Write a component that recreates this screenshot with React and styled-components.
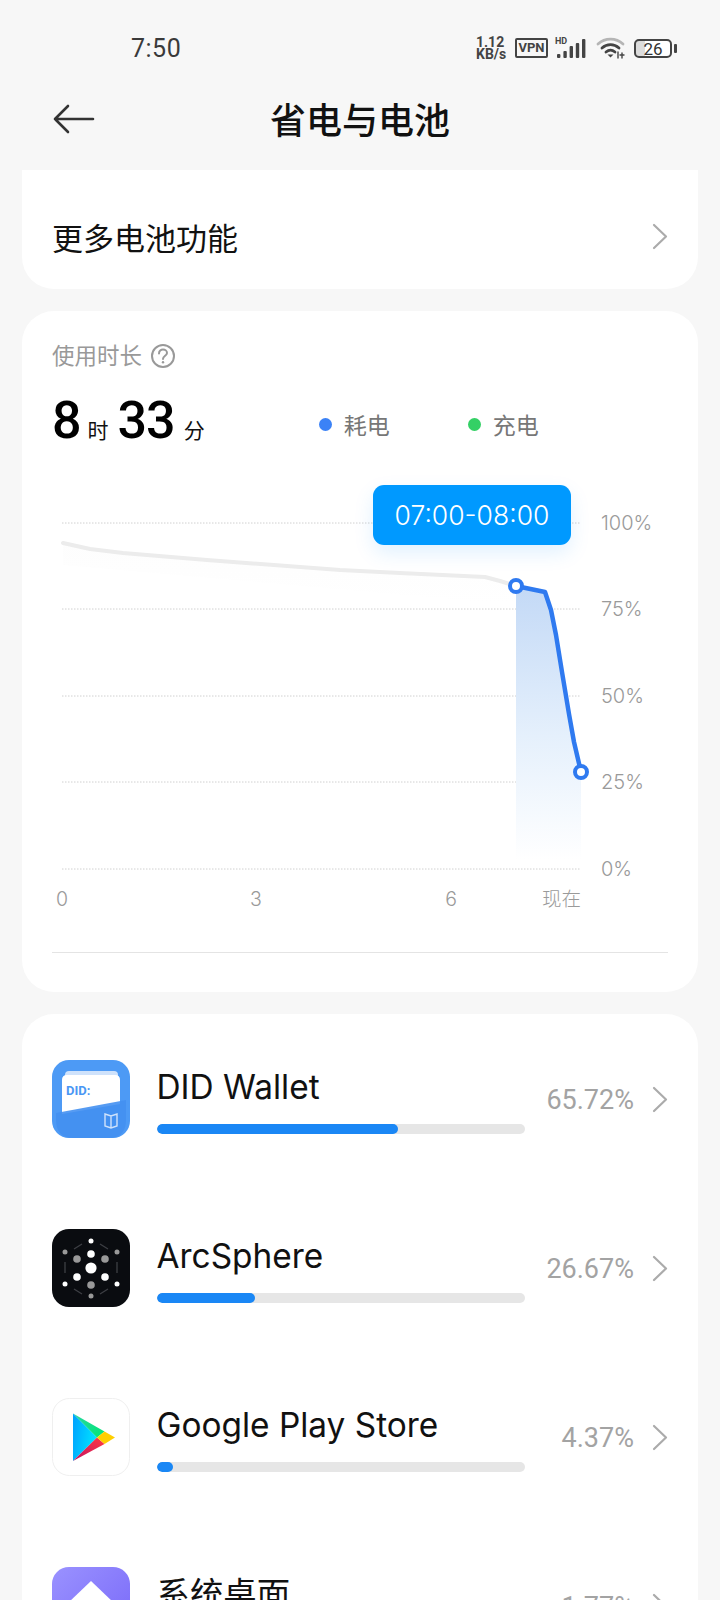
import React from "react";
import styled, { createGlobalStyle } from "styled-components";

const UI = `Inter, "Noto Sans CJK SC", sans-serif`;
const NUM = `Roboto, "Noto Sans CJK SC", sans-serif`;

const Global = createGlobalStyle`
  html, body { margin: 0; padding: 0; background: #f7f7f7; overflow: hidden; }
  body { font-family: ${UI}; }
  #root { height: 1600px; overflow: hidden; }
`;

const Screen = styled.div`
  width: 720px;
  height: 1600px;
  overflow: hidden;
  background: #f7f7f7;
`;

/* ---------- status bar ---------- */
const StatusBar = styled.div`
  height: 56px;
  padding: 40px 48px 0 131px;
  box-sizing: border-box;
  display: flex;
  align-items: center;
  color: #333;
`;
const Clock = styled.div`
  font-family: ${NUM};
  font-size: 25px;
  color: #3a3a3a;
  letter-spacing: 0.5px;
  flex: 1;
`;
const Indicators = styled.div`
  display: flex;
  align-items: center;
`;
const Speed = styled.div`
  font-family: ${NUM};
  font-size: 14px;
  line-height: 12px;
  font-weight: 700;
  width: 39px;
  color: #444;
`;
const VpnBadge = styled.div`
  width: 33px;
  height: 20px;
  box-sizing: border-box;
  border: 2px solid #444;
  border-radius: 2px;
  font-family: ${NUM};
  font-size: 13px;
  font-weight: 700;
  line-height: 16px;
  text-align: center;
  color: #444;
  margin-right: 7px;
`;
const Battery = styled.div`
  position: relative;
  width: 38px;
  height: 19px;
  box-sizing: border-box;
  border: 2px solid #444;
  border-radius: 5px;
  margin-left: 8px;
  font-family: ${NUM};
  font-size: 17px;
  line-height: 16px;
  text-align: center;
  color: #333;
  background: linear-gradient(90deg, #dcdcdc 0 26%, #fff 26%);
  &::after {
    content: "";
    position: absolute;
    right: -7px;
    top: 3px;
    width: 3px;
    height: 9px;
    border-radius: 1px;
    background: #444;
  }
`;

/* ---------- title bar ---------- */
const TitleBar = styled.div`
  height: 114px;
  position: relative;
  display: flex;
  align-items: center;
  justify-content: center;
  padding-top: 9px;
  box-sizing: border-box;
`;
const BackButton = styled.svg`
  position: absolute;
  left: 53px;
  top: 48px;
`;
const Title = styled.h1`
  margin: 0;
  font-size: 36px;
  font-weight: 500;
  color: #111;
`;

/* ---------- cards ---------- */
const Cards = styled.div`
  padding: 0 22px;
  display: flex;
  flex-direction: column;
  gap: 22px;
`;
const Card = styled.section`
  background: #fff;
  border-radius: ${(p) => (p.$flushTop ? "0 0 32px 32px" : "32px")};
`;
const MoreRow = styled.div`
  height: 119px;
  padding: 13px 30px 0;
  box-sizing: border-box;
  display: flex;
  align-items: center;
  justify-content: space-between;
  font-size: 31px;
  color: #111;
`;
const ChevronMark = styled.svg`
  flex: none;
  display: block;
`;
const Chevron = () => (
  <ChevronMark width="16" height="27" viewBox="0 0 16 27" fill="none" stroke="#ababab" strokeWidth="2.2" strokeLinecap="round" strokeLinejoin="round">
    <path d="M2 2 L14 13.5 L2 25" />
  </ChevronMark>
);

/* ---------- usage card ---------- */
const UsageCard = styled(Card)`
  height: 681px;
  padding: 29px 30px 0;
  box-sizing: border-box;
`;
const CaptionRow = styled.div`
  display: flex;
  align-items: center;
  gap: 8px;
  font-size: 22.5px;
  line-height: 32px;
  color: #999;
`;
const DurationRow = styled.div`
  display: flex;
  align-items: baseline;
  margin-top: 19px;
  height: 60px;
`;
const BigNum = styled.span`
  font-family: ${NUM};
  font-size: 52px;
  font-weight: 500;
  color: #000;
  line-height: 60px;
  letter-spacing: ${(p) => p.$track || 0}px;
  margin-right: ${(p) => p.$gap}px;
`;
const Unit = styled.span`
  font-size: 21px;
  color: #111;
  margin-right: ${(p) => p.$gap}px;
`;
const Legend = styled.div`
  display: flex;
  align-items: center;
  gap: 12px;
  font-size: 23px;
  color: #777;
  margin-right: ${(p) => p.$gap}px;
  margin-top: 6px;
  align-self: center;
`;
const Dot = styled.i`
  width: 13px;
  height: 13px;
  border-radius: 50%;
  background: ${(p) => p.$color};
`;
const ChartWrap = styled.div`
  position: relative;
  width: 676px;
  height: 446px;
  margin: 25px -30px 30px;
  svg { display: block; }
`;
const Tooltip = styled.div`
  position: absolute;
  left: 351px;
  top: 9px;
  width: 198px;
  height: 60px;
  border-radius: 11px;
  background: #0099ff;
  box-shadow: 0 8px 20px rgba(0, 140, 255, 0.12);
  color: #fff;
  font-size: 26.5px;
  font-weight: 300;
  line-height: 60px;
  text-align: center;
`;
const Divider = styled.div`
  height: 1px;
  background: #e4e4e4;
`;

/* ---------- app usage rows ---------- */
const AppList = styled(Card)`
  padding: 46px 30px 0 30px;
  display: flex;
  flex-direction: column;
  gap: 91px;
`;
const AppRow = styled.div`
  display: flex;
  align-items: center;
  height: 78px;
`;
const IconBox = styled.div`
  width: 78px;
  height: 78px;
  flex: none;
  margin-right: 26.5px;
  svg { display: block; }
`;
const AppMain = styled.div`
  width: 368px;
  align-self: flex-start;
`;
const AppName = styled.div`
  font-size: 33.4px;
  line-height: 54px;
  color: #111;
  white-space: nowrap;
`;
const BarTrack = styled.div`
  height: 10px;
  margin-top: 10px;
  border-radius: 5px;
  background: #e6e6e6;
  overflow: hidden;
`;
const BarFill = styled.div`
  height: 100%;
  border-radius: 5px;
  background: #1a87f5;
`;
const Percent = styled.div`
  flex: 1;
  text-align: right;
  font-family: ${NUM};
  font-size: 27px;
  color: #a3a3a3;
  margin: 2px 18px 0 0;
  white-space: nowrap;
`;

/* ---------- drawings ---------- */
const SignalIcon = () => (
  <svg width="32" height="22" viewBox="0 0 32 22" fill="#444">
    <text x="0" y="7" fontSize="9" fontWeight="700" fontFamily="Roboto, sans-serif">HD</text>
    <rect x="2" y="17" width="3.4" height="4" rx="1" />
    <rect x="8.4" y="14" width="3.4" height="7" rx="1" />
    <rect x="14.6" y="9" width="3.4" height="12" rx="1" />
    <rect x="20.8" y="6" width="3.4" height="15" rx="1" />
    <rect x="27" y="2" width="3.4" height="19" rx="1" />
  </svg>
);

const WifiMark = styled.svg`
  margin-left: 9px;
`;
const WifiIcon = () => (
  <WifiMark width="30" height="22" viewBox="0 0 30 22" fill="none" strokeLinecap="round">
    <path d="M2 7 C9 0.5 20 0.5 27 7" stroke="#b5b5b5" strokeWidth="2.8" />
    <path d="M6 11 C11 6.5 18 6.5 23 11" stroke="#444" strokeWidth="2.8" />
    <path d="M10 15 C13 12.5 16 12.5 19 15" stroke="#444" strokeWidth="2.8" />
    <path d="M11.5 17.5 L17.5 17.5 L14.5 20.5 Z" fill="#444" />
    <path d="M22 15 v6 M26 21 v-5 M24 18 h4" stroke="#444" strokeWidth="1.4" />
  </WifiMark>
);

const BackArrow = () => (
  <BackButton width="42" height="30" viewBox="0 0 42 30" fill="none" stroke="#333" strokeWidth="2.6" strokeLinecap="round" strokeLinejoin="round">
    <path d="M2 15 H40 M15 2 L2 15 L15 28" />
  </BackButton>
);

const HelpIcon = () => (
  <svg width="26" height="26" viewBox="0 0 26 26" fill="none" stroke="#999" strokeWidth="2">
    <circle cx="13" cy="13" r="11" />
    <path d="M9 10.5 C9 7.8 11 6.6 13 6.6 C15.2 6.6 17 8 17 10 C17 12.6 13 13 13 16" strokeLinecap="round" />
    <circle cx="13" cy="19.2" r="1.2" fill="#999" stroke="none" />
  </svg>
);

const DidIcon = () => (
  <svg width="78" height="78" viewBox="0 0 78 78">
    <rect width="78" height="78" rx="17" fill="#4d9af5" />
    <path d="M13 15 Q13 11 17 11 H62 Q66 11 66 15 V30 H13 Z" fill="#cfe2fb" />
    <path d="M10 20 Q10 15 15 15 H63 Q68 15 68 20 V44 L10 54 Z" fill="#fff" />
    <text x="14" y="35" fontSize="13" fontWeight="700" fill="#4a97f4" fontFamily="Roboto, sans-serif">DID:</text>
    <path d="M4 53 L74 40 V60 Q74 78 56 78 H22 Q4 78 4 60 Z" fill="#4490f1" opacity="0.9" />
    <path d="M53 54 L59 56 L65 54 V66 L59 68 L53 66 Z M59 56 V68" fill="none" stroke="#cfe2fb" strokeWidth="1.4" />
  </svg>
);

const arcDots = [
  [39, 39, 5.6, "#fff"], [39, 12, 2.5, "#fff"], [39, 25, 3.8, "#fff"],
  [25, 30, 3.8, "#999"], [53, 30, 3.8, "#999"], [25, 48, 3.8, "#fff"],
  [53, 48, 3.8, "#fff"], [39, 56, 3.8, "#999"], [39, 67, 2.5, "#999"],
  [13, 23, 2.5, "#999"], [65, 23, 2.5, "#999"], [13, 55, 2.5, "#fff"], [65, 55, 2.5, "#fff"],
];

const ArcSphereIcon = () => (
  <svg width="78" height="78" viewBox="0 0 78 78">
    <rect width="78" height="78" rx="17" fill="#0a0c10" />
    <path d="M22 20 L30 15 M48 15 L56 20 M13 33 V44 M65 33 V44 M22 60 L30 65 M48 65 L56 60" stroke="#3d3f44" strokeWidth="1.3" />
    {arcDots.map(([cx, cy, r, fill]) => (
      <circle key={`${cx}-${cy}`} cx={cx} cy={cy} r={r} fill={fill} />
    ))}
  </svg>
);

const PlayIcon = () => (
  <svg width="78" height="78" viewBox="0 0 78 78">
    <defs>
      <linearGradient id="playBlue" x1="0" y1="0" x2="1" y2="0.3">
        <stop offset="0" stopColor="#00a0ff" />
        <stop offset="1" stopColor="#00e3ff" />
      </linearGradient>
      <linearGradient id="playGreen" x1="0" y1="0" x2="1" y2="1">
        <stop offset="0" stopColor="#2ad6a0" />
        <stop offset="1" stopColor="#00e676" />
      </linearGradient>
      <linearGradient id="playRed" x1="1" y1="0" x2="0" y2="1">
        <stop offset="0" stopColor="#ff3a44" />
        <stop offset="1" stopColor="#c31162" />
      </linearGradient>
    </defs>
    <rect x="0.5" y="0.5" width="77" height="77" rx="17" fill="#fff" stroke="#efefef" />
    <path d="M21 15.5 L45 39.5 L21 63 Z" fill="url(#playBlue)" />
    <path d="M21 15.5 L52.5 33.5 L45 39.5 Z" fill="url(#playGreen)" />
    <path d="M21 63 L45 39.5 L52.5 46 Z" fill="url(#playRed)" />
    <path d="M52.5 33.5 L63 39.5 L52.5 46 L45 39.5 Z" fill="#ffcf00" />
  </svg>
);

const DesktopIcon = () => (
  <svg width="78" height="78" viewBox="0 0 78 78">
    <defs>
      <linearGradient id="launcher" x1="0" y1="0" x2="1" y2="1">
        <stop offset="0" stopColor="#9a92ff" />
        <stop offset="1" stopColor="#7766f8" />
      </linearGradient>
    </defs>
    <rect width="78" height="78" rx="17" fill="url(#launcher)" />
    <path d="M39 14 L62 36 V62 H16 V36 Z" fill="#fff" strokeLinejoin="round" />
  </svg>
);

/* ---------- battery chart, drawn on a canvas as wide as its card ---------- */
const OX = 22;
const OY = 476;
const pts = (list) => list.map(([x, y]) => `${x - OX},${y - OY}`).join(" ");

const gridYs = [
  [523, "100%"], [609, "75%"], [696, "50%"], [782, "25%"], [869, "0%"],
];
const xTicks = [
  [62, "0", "middle"], [256, "3", "middle"], [451, "6", "middle"], [581, "现在", "end"],
];
const idleLine = [
  [63, 543], [90, 549], [123, 553], [207, 560], [340, 570], [400, 573], [485, 577], [500, 581], [516, 586],
];
const drainLine = [
  [516, 586], [545, 592], [551, 610], [556, 635], [562, 672], [569, 714], [574, 742], [581, 772],
];

const BatteryChart = () => (
  <svg width="676" height="446" viewBox="0 0 676 446" fontFamily={UI}>
    <defs>
      <linearGradient id="drainFill" x1="0" y1="0" x2="0" y2="1">
        <stop offset="0" stopColor="#c3d9f6" />
        <stop offset="0.55" stopColor="#e5f0fc" />
        <stop offset="1" stopColor="#ffffff" />
      </linearGradient>
      <linearGradient id="idleFill" x1="0" y1="0" x2="0" y2="1">
        <stop offset="0" stopColor="#f6f6f6" />
        <stop offset="1" stopColor="#ffffff" />
      </linearGradient>
    </defs>
    {gridYs.map(([y, label]) => (
      <g key={label}>
        <line x1={40} x2={559} y1={y - OY} y2={y - OY} stroke="#d0d0d0" strokeDasharray="1.5 1.5" />
        <text x={579} y={y - OY + 7} fontSize="20" fontWeight="300" fill="#9a9a9a">{label}</text>
      </g>
    ))}
    <polygon points={pts([...idleLine, [516, 605], [63, 565]])} fill="url(#idleFill)" opacity="0.2" />
    <polyline points={pts(idleLine)} fill="none" stroke="#ececec" strokeWidth="4" strokeLinejoin="round" strokeLinecap="round" />
    <polygon points={pts([...drainLine, [581, 860], [516, 860]])} fill="url(#drainFill)" />
    <polyline points={pts(drainLine)} fill="none" stroke="#2f7af0" strokeWidth="4.5" strokeLinejoin="round" />
    <circle cx={516 - OX} cy={586 - OY} r="6" fill="#fff" stroke="#2f7af0" strokeWidth="4" />
    <circle cx={581 - OX} cy={772 - OY} r="6" fill="#fff" stroke="#2f7af0" strokeWidth="4" />
    {xTicks.map(([x, label, anchor]) => (
      <text key={label} x={x - OX} y={430} fontSize="19.5" fontWeight="300" fill="#9a9a9a" textAnchor={anchor}>{label}</text>
    ))}
  </svg>
);

const apps = [
  { name: "DID Wallet", pct: 65.72, Icon: DidIcon },
  { name: "ArcSphere", pct: 26.67, Icon: ArcSphereIcon },
  { name: "Google Play Store", pct: 4.37, Icon: PlayIcon },
  { name: "系统桌面", pct: 1.77, Icon: DesktopIcon },
];

export default function App() {
  return (
    <Screen>
      <Global />
      <StatusBar>
        <Clock>7:50</Clock>
        <Indicators>
          <Speed>1.12<br />KB/s</Speed>
          <VpnBadge>VPN</VpnBadge>
          <SignalIcon />
          <WifiIcon />
          <Battery>26</Battery>
        </Indicators>
      </StatusBar>
      <TitleBar>
        <BackArrow />
        <Title>省电与电池</Title>
      </TitleBar>
      <Cards>
        <Card $flushTop>
          <MoreRow>
            更多电池功能
            <Chevron />
          </MoreRow>
        </Card>
        <UsageCard>
          <CaptionRow>使用时长 <HelpIcon /></CaptionRow>
          <DurationRow>
            <BigNum $gap={6}>8</BigNum>
            <Unit $gap={9}>时</Unit>
            <BigNum $gap={9} $track={-1}>33</BigNum>
            <Unit $gap={114}>分</Unit>
            <Legend $gap={78}><Dot $color="#3b82f6" />耗电</Legend>
            <Legend $gap={0}><Dot $color="#34d065" />充电</Legend>
          </DurationRow>
          <ChartWrap>
            <BatteryChart />
            <Tooltip>07:00-08:00</Tooltip>
          </ChartWrap>
          <Divider />
        </UsageCard>
        <AppList>
          {apps.map(({ name, pct, Icon }) => (
            <AppRow key={name}>
              <IconBox><Icon /></IconBox>
              <AppMain>
                <AppName>{name}</AppName>
                <BarTrack>
                  <BarFill style={{ width: `${Math.max(pct, 4)}%` }} />
                </BarTrack>
              </AppMain>
              <Percent>{pct.toFixed(2)}%</Percent>
              <Chevron />
            </AppRow>
          ))}
        </AppList>
      </Cards>
    </Screen>
  );
}
